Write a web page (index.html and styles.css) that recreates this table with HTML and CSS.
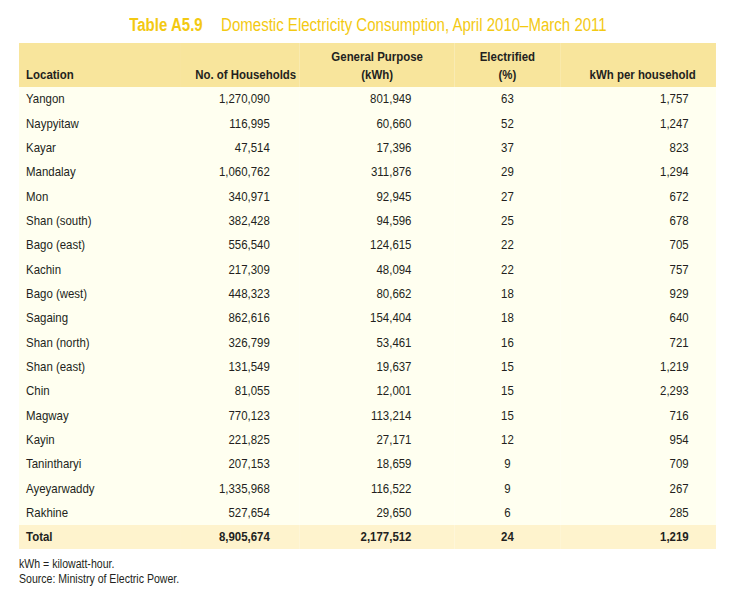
FILE: index.html
```html
<!DOCTYPE html>
<html>
<head>
<meta charset="utf-8">
<link rel="stylesheet" href="styles.css">
</head>
<body>
<div class="page">
  <h1 class="title"><span class="tinner"><span class="tno">Table A5.9</span><span class="ttext">Domestic Electricity Consumption, April 2010–March 2011</span></span></h1>
  <div class="narrow">
  <table class="data">
    <colgroup>
      <col class="c1"><col class="c2"><col class="c3"><col class="c4"><col class="c5">
    </colgroup>
    <thead>
      <tr>
        <th class="h-loc">Location</th>
        <th class="h-hh">No. of Households</th>
        <th class="h-gp">General Purpose<br>(kWh)</th>
        <th class="h-el">Electrified<br>(%)</th>
        <th class="h-kw">kWh per household</th>
      </tr>
    </thead>
    <tbody>
      <tr><td>Yangon</td><td>1,270,090</td><td>801,949</td><td>63</td><td>1,757</td></tr>
      <tr><td>Naypyitaw</td><td>116,995</td><td>60,660</td><td>52</td><td>1,247</td></tr>
      <tr><td>Kayar</td><td>47,514</td><td>17,396</td><td>37</td><td>823</td></tr>
      <tr><td>Mandalay</td><td>1,060,762</td><td>311,876</td><td>29</td><td>1,294</td></tr>
      <tr><td>Mon</td><td>340,971</td><td>92,945</td><td>27</td><td>672</td></tr>
      <tr><td>Shan (south)</td><td>382,428</td><td>94,596</td><td>25</td><td>678</td></tr>
      <tr><td>Bago (east)</td><td>556,540</td><td>124,615</td><td>22</td><td>705</td></tr>
      <tr><td>Kachin</td><td>217,309</td><td>48,094</td><td>22</td><td>757</td></tr>
      <tr><td>Bago (west)</td><td>448,323</td><td>80,662</td><td>18</td><td>929</td></tr>
      <tr><td>Sagaing</td><td>862,616</td><td>154,404</td><td>18</td><td>640</td></tr>
      <tr><td>Shan (north)</td><td>326,799</td><td>53,461</td><td>16</td><td>721</td></tr>
      <tr><td>Shan (east)</td><td>131,549</td><td>19,637</td><td>15</td><td>1,219</td></tr>
      <tr><td>Chin</td><td>81,055</td><td>12,001</td><td>15</td><td>2,293</td></tr>
      <tr><td>Magway</td><td>770,123</td><td>113,214</td><td>15</td><td>716</td></tr>
      <tr><td>Kayin</td><td>221,825</td><td>27,171</td><td>12</td><td>954</td></tr>
      <tr><td>Tanintharyi</td><td>207,153</td><td>18,659</td><td>9</td><td>709</td></tr>
      <tr><td>Ayeyarwaddy</td><td>1,335,968</td><td>116,522</td><td>9</td><td>267</td></tr>
      <tr><td>Rakhine</td><td>527,654</td><td>29,650</td><td>6</td><td>285</td></tr>
    </tbody>
    <tfoot>
      <tr><td>Total</td><td>8,905,674</td><td>2,177,512</td><td>24</td><td>1,219</td></tr>
    </tfoot>
  </table>
  <div class="notes">
    <p>kWh = kilowatt-hour.</p>
    <p>Source: Ministry of Electric Power.</p>
  </div>
  </div>
</div>
</body>
</html>
```

FILE: styles.css
```css
* { box-sizing: border-box; }
html, body { margin: 0; padding: 0; background: #ffffff; overflow: hidden; }
body {
  font-family: "Liberation Sans", Arial, sans-serif;
  color: #231f20;
}
.page {
  padding: 8px 0 0 19px;
  width: 735px;
}
.title {
  margin: 0 0 0 -19px;
  width: 735px;
  height: 35px;
  display: flex;
  justify-content: center;
  align-items: center;
  font-size: 18px;
  font-weight: normal;
  color: #f3c912;
}
.tinner {
  display: flex;
  gap: 22px;
  white-space: nowrap;
  transform: scaleX(0.835);
  transform-origin: center;
}
.tno { font-weight: bold; }
.narrow {
  width: 792px;
  transform: scaleX(0.88);
  transform-origin: left top;
}
.data {
  width: 792px;
  border-collapse: collapse;
  table-layout: fixed;
  font-size: 13px;
}
.c1 { width: 183px; }
.c2 { width: 136px; }
.c3 { width: 176px; }
.c4 { width: 120px; }
.c5 { width: 177px; }
thead tr { background: #f8e59c; }
thead th {
  font-weight: bold;
  vertical-align: bottom;
  line-height: 18px;
  padding: 3px 0 3px 0;
  height: 44px;
  white-space: nowrap;
}
.h-loc { text-align: left; padding-left: 8px; }
.h-hh { text-align: right; padding-right: 4px; }
.h-gp { text-align: center; }
.h-el { text-align: center; }
.h-kw { text-align: right; padding-right: 23px; }
tbody { background: #fffff0; }
tbody td, tfoot td {
  height: 24.35px;
  padding: 0;
  line-height: 16px;
  vertical-align: middle;
}
tfoot tr { background: #fef3cd; }
tfoot td { font-weight: bold; height: 24px; }
td:nth-child(1) { text-align: left; padding-left: 8px; }
td:nth-child(2) { text-align: right; padding-right: 34px; }
td:nth-child(3) { text-align: right; padding-right: 49px; }
td:nth-child(4) { text-align: center; }
td:nth-child(5) { text-align: right; padding-right: 31px; }
.notes {
  margin-top: 8px;
  font-size: 12px;
  line-height: 15px;
}
.notes p { margin: 0; }
```
